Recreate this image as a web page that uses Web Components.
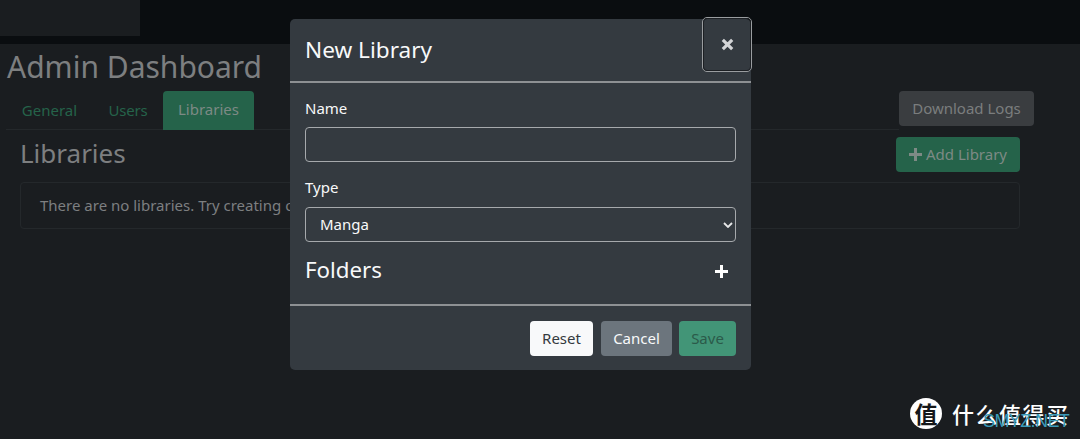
<!DOCTYPE html>
<html><head><meta charset="utf-8"><style>
html,body{margin:0;height:100%;}
body{background:#1a1d20;font-family:"Noto Sans","Open Sans",sans-serif;overflow:hidden;width:1080px;height:439px;position:relative}
</style></head><body>
<admin-nav></admin-nav>
<admin-page></admin-page>
<library-modal></library-modal>
<site-mark></site-mark>
<script>
function def(name,html){customElements.define(name,class extends HTMLElement{constructor(){super();this.attachShadow({mode:'open'}).innerHTML=html;}});}
def('admin-nav',`<style>:host{display:block;height:44px;background:#0a0d10}
.b{width:140px;height:36px;background:#1a1d20}</style><div class="b"></div>`);
def('admin-page',`<style>
:host{display:block;padding:0 46px 0 7px;color:#7d7f80;font-size:16px;line-height:24px}
h2{margin:0;font-weight:400;font-size:30px;line-height:45px;height:47px}
.tabbar{display:flex;height:39px}
.tabs{flex:1;display:flex;border-bottom:1px solid #24282b;height:38px;padding-left:0;margin-left:-1px}
.tab{height:38px;display:flex;align-items:center;justify-content:center;color:#25634a;font-size:15px;box-sizing:border-box;padding-bottom:1px}
.g{width:87px}.u{width:70px;letter-spacing:-.2px}
.tab.on{width:91px;background:#25634a;color:#7d8a85;border-radius:4px 4px 0 0;height:39px;padding-bottom:3px}
.dl{height:35px;width:135px;background:#3a3d40;border-radius:4px;display:flex;align-items:center;justify-content:center;font-size:15px;color:#7b7d7e;line-height:33px}
.head{display:flex;justify-content:space-between;margin:7px 14px 0 13px;height:45px}
h3{margin:-1px 0 0;font-weight:400;font-size:26px;line-height:34px}
.add{height:35px;width:124px;background:#25634a;border-radius:4px;display:flex;align-items:center;justify-content:center;gap:4px;color:#7d8a85;font-size:15px;line-height:33px}
.card{margin:0 14px 0 13px;height:47px;border:1px solid #24282b;border-radius:4px;padding:0 19px 1px;display:flex;align-items:center;font-size:15px;box-sizing:border-box}
</style>
<h2>Admin Dashboard</h2>
<div class="tabbar"><div class="tabs"><div class="tab g">General</div><div class="tab u">Users</div><div class="tab on">Libraries</div></div><div class="dl">Download Logs</div></div>
<div class="head"><h3>Libraries</h3><div class="add"><svg width="13" height="13" viewBox="0 0 13 13"><path d="M5 0h3v5h5v3H8v5H5V8H0V5h5z" fill="#7d8a85"/></svg>Add Library</div></div>
<div class="card">There are no libraries. Try creating one.</div>`);
def('library-modal',`<style>
:host{position:absolute;left:290px;top:19px;width:461px;height:351px;background:#343a40;border-radius:5px;color:#f8f9fa;display:flex;flex-direction:column;font-size:15px;box-sizing:border-box}
.top{display:flex;align-items:center;justify-content:space-between;padding:0 0 2px 15px;border-bottom:2px solid #8e9194;box-sizing:border-box;height:64px;flex:none}
h5{margin:0;font-size:22.6px;font-weight:400}
.x{position:absolute;right:-1px;top:-2px;width:50px;height:55px;box-sizing:border-box;border:1px solid #9a9da0;outline:1px solid #1c1f23;outline-offset:-2px;border-radius:5px;display:flex;align-items:center;justify-content:center}
.body{flex:1;padding:14px 15px 0;display:flex;flex-direction:column}
label{line-height:22px;display:block;height:22px;margin-bottom:8px;font-size:15px}
label.t{line-height:20px}
.ctl{height:35px;border:1px solid #a6a9ac;border-radius:4px;box-sizing:border-box;display:flex;align-items:center;padding:0 15px 0 14px;justify-content:space-between}
.ctl span{margin-top:-2px}
.gap{height:15px;flex:none}
.ctl svg{margin-right:-13px}
.fold{display:flex;justify-content:space-between;align-items:center;margin-top:11px}
h4{margin:0;font-size:22.3px;font-weight:400;line-height:34px}
.fold svg{margin:2px 8px 0 0}
.foot{height:66px;border-top:2px solid #8e9194;display:flex;justify-content:flex-end;align-items:center;padding:1px 15px 0 0;box-sizing:border-box;flex:none}
.btn{height:35px;border-radius:4px;display:flex;align-items:center;justify-content:center;font-size:15px;line-height:33px}
.r{width:63px;background:#f8f9fa;color:#343a40}.c{width:71px;background:#6c757d;margin:0 7px 0 8px}.s{width:57px;background:#429577;color:#2b5a4a}
</style>
<div class="top"><h5>New Library</h5><div class="x"><svg width="13" height="13" viewBox="0 0 13 13"><path d="M1.8 1.8 11.2 11.2M11.2 1.8 1.8 11.2" stroke="#d4d5d7" stroke-width="3.2"/></svg></div></div>
<div class="body">
<label>Name</label><div class="ctl"></div><div class="gap"></div>
<label class="t">Type</label><div class="ctl"><span>Manga</span><svg width="10" height="6" viewBox="0 0 10 6"><path d="M1 1l4 4 4-4" fill="none" stroke="#e6e7e8" stroke-width="1.8"/></svg></div>
<div class="fold"><h4>Folders</h4><svg width="13" height="13" viewBox="0 0 13 13"><path d="M5 0h3v5h5v3H8v5H5V8H0V5h5z" fill="#fff"/></svg></div>
</div>
<div class="foot"><div class="btn r">Reset</div><div class="btn c">Cancel</div><div class="btn s">Save</div></div>`);
def('site-mark',`<style>
:host{position:absolute;left:910px;top:397px;width:170px;height:32px;display:flex;align-items:center;color:#fff}
.c{width:32px;height:31px;border-radius:50%;background:#fff;color:#15181b;font:700 23px/30px "Noto Sans CJK SC",sans-serif;text-align:center;flex:none}
.t{margin-left:10px;font:500 22px/31px "Noto Sans CJK SC",sans-serif;letter-spacing:1.5px;white-space:nowrap}
.w{position:absolute;left:73px;top:14px;color:#3a9ab8;font:400 18px/20px "Liberation Sans",sans-serif;letter-spacing:-.6px}
</style><div class="c">值</div><div class="t">什么值得买</div><div class="w">SMYZ.NET</div>`);
</script></body></html>
